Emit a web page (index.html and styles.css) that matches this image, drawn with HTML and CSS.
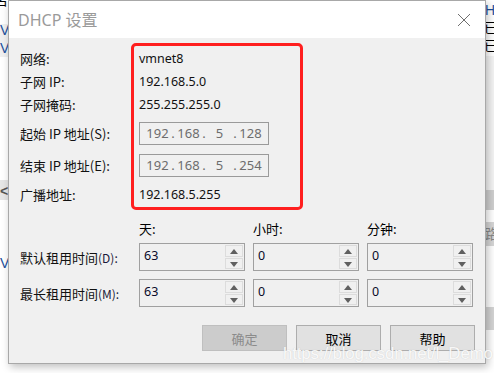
FILE: index.html
```html
<!DOCTYPE html>
<html lang="zh-CN">
<head>
    <meta charset="UTF-8">
    <title>DHCP 设置</title>
    <link rel="stylesheet" href="styles.css">
</head>
<body>
<div class="desk">
    <div class="back back-left">
        <span class="frag f1">名</span>
        <span class="frag f2">V</span>
        <span class="frag f3">V</span>
        <span class="frag f4">&lt;</span>
        <span class="frag f5">V</span>
    </div>
    <div class="back back-right">
        <span class="frag r1">H</span>
        <span class="frag r2">已</span>
        <span class="frag r3">已</span>
        <span class="frag r4">路</span>
    </div>

    <div class="dialog">
        <div class="titlebar">
            <span class="title">DHCP 设置</span>
            <svg class="close" width="14" height="14" viewBox="0 0 14 14">
                <path d="M1 1 L13 13 M13 1 L1 13" stroke="#6f6f6f" stroke-width="1" fill="none"/>
            </svg>
        </div>

        <div class="content">
            <div class="info">
                <span class="label">网络:</span><span class="value">vmnet8</span>
                <span class="label">子网 IP:</span><span class="value">192.168.5.0</span>
                <span class="label">子网掩码:</span><span class="value">255.255.255.0</span>
                <span class="label">起始 IP 地址(S):</span>
                <div class="ipbox"><span>192</span><i>.</i><span>168</span><i>.</i><span>5</span><i>.</i><span>128</span></div>
                <span class="label">结束 IP 地址(E):</span>
                <div class="ipbox"><span>192</span><i>.</i><span>168</span><i>.</i><span>5</span><i>.</i><span>254</span></div>
                <span class="label">广播地址:</span><span class="value">192.168.5.255</span>
            </div>

            <div class="lease">
                <span></span>
                <span class="head">天:</span>
                <span class="head">小时:</span>
                <span class="head">分钟:</span>

                <span class="label">默认租用时间<small>(D):</small></span>
                <div class="spin"><span class="num">63</span><div class="btns"><span class="up"></span><span class="down"></span></div></div>
                <div class="spin"><span class="num">0</span><div class="btns"><span class="up"></span><span class="down"></span></div></div>
                <div class="spin"><span class="num">0</span><div class="btns"><span class="up"></span><span class="down"></span></div></div>

                <span class="label">最长租用时间<small>(M):</small></span>
                <div class="spin"><span class="num">63</span><div class="btns"><span class="up"></span><span class="down"></span></div></div>
                <div class="spin"><span class="num">0</span><div class="btns"><span class="up"></span><span class="down"></span></div></div>
                <div class="spin"><span class="num">0</span><div class="btns"><span class="up"></span><span class="down"></span></div></div>
            </div>

            <div class="buttons">
                <button class="btn disabled">确定</button>
                <button class="btn">取消</button>
                <button class="btn">帮助</button>
            </div>
        </div>

        <div class="mark"></div>
    </div>
    <div class="watermark">https://blog.csdn.net/l_Demo</div>
</div>
</body>
</html>
```

FILE: styles.css
```css
* {
    margin: 0;
    padding: 0;
    box-sizing: border-box;
}

body {
    background: #fff;
    font-family: "Noto Sans", "Noto Sans CJK SC", sans-serif;
    font-size: 13px;
    color: #000;
}

.desk {
    width: 494px;
    height: 373px;
    position: relative;
    overflow: hidden;
}

/* windows behind the dialog */
.back {
    position: absolute;
    top: 0;
    height: 373px;
}

.back-left {
    left: 0;
    width: 10px;
    background: linear-gradient(#fff 0, #fff 24px, #f0f0f0 24px, #f0f0f0 57px, #fff 57px, #fff 180px, #e6e6e6 180px, #e6e6e6 200px, #fff 200px);
}

.back-right {
    right: 0;
    width: 12px;
    background: linear-gradient(#fff 0, #fff 56px, #f4f4f4 56px, #f4f4f4 190px, #cfcfcf 190px, #cfcfcf 210px, #fff 210px, #fff 222px, #d6d6d6 222px, #d6d6d6 246px, #fff 246px, #fff 307px, #d4d4d4 307px, #d4d4d4 330px, #fff 330px);
}

.frag {
    position: absolute;
    font-family: "Liberation Sans", "Noto Sans CJK SC", sans-serif;
    font-size: 14px;
    line-height: 16px;
}

.f1 { left: -6px; top: -8px; }
.f2 { left: 0; top: 22px; color: #1c4f9c; }
.f3 { left: 0; top: 40px; color: #1c4f9c; }
.f4 { left: 0; top: 183px; color: #555; font-weight: bold; }
.f5 { left: 0; top: 255px; color: #1c4f9c; }
.r1 { left: 3px; top: 2px; color: #1c4f9c; }
.r2 { left: 2px; top: 20px; }
.r3 { left: 2px; top: 38px; }
.r4 { left: 2px; top: 226px; color: #888; }

/* dialog */
.dialog {
    position: relative;
    margin-left: 8px;
    width: 478px;
    height: 364px;
    background: #f0f0f0;
    border: 1px solid #a8a8a8;
    box-shadow: 2px 3px 8px rgba(0, 0, 0, 0.25);
    display: flex;
    flex-direction: column;
}

.titlebar {
    height: 37px;
    background: #fff;
    display: flex;
    align-items: center;
    justify-content: space-between;
    padding: 0 14px 2px 9px;
}

.title {
    font-family: "Noto Sans", "Noto Sans CJK SC", sans-serif;
    font-size: 16px;
    color: #9a9a9a;
}

.close {
    margin-top: 2px;
}

.content {
    padding: 9px 10px 0 11px;
    display: flex;
    flex-direction: column;
}

.label {
    font-family: "Noto Sans CJK SC", sans-serif;
    font-size: 13px;
    color: #111;
    white-space: nowrap;
}

.label small {
    font-size: 12px;
    color: #1a1a3a;
}

.info {
    display: grid;
    grid-template-columns: 119px 1fr;
    grid-template-rows: 23px 23px 23px 34px 31px 26px;
    align-items: center;
}

.value {
    font-family: "Noto Sans", sans-serif;
    font-size: 12.5px;
    color: #111;
}

.ipbox {
    width: 130px;
    height: 23px;
    border: 1px solid #9a9a9a;
    background: #f0f0f0;
    color: #6d6d6d;
    font-family: "Noto Sans", sans-serif;
    font-size: 13px;
    line-height: 21px;
    padding-left: 6px;
    display: flex;
}

.ipbox span {
    width: 23px;
    text-align: center;
}

.ipbox i {
    width: 8px;
    font-style: normal;
    text-align: center;
}

.lease {
    margin-top: 7px;
    display: grid;
    grid-template-columns: 111px 106px 106px 106px;
    grid-template-rows: 21px 28px 28px;
    column-gap: 8px;
    row-gap: 8px;
    align-items: center;
}

.head {
    font-family: "Noto Sans CJK SC", sans-serif;
    font-size: 13px;
    align-self: end;
    line-height: 16px;
    margin-bottom: -2px;
}

.spin {
    height: 28px;
    border: 1px solid #a0a0a0;
    background: #f0f0f0;
    display: flex;
    justify-content: space-between;
    padding: 1px;
}

.num {
    font-family: "Noto Sans", sans-serif;
    font-size: 12.5px;
    color: #0a0a2a;
    padding: 2px 0 0 3px;
}

.btns {
    width: 18px;
    display: flex;
    flex-direction: column;
    gap: 1px;
}

.btns span {
    flex: 1;
    border: 1px solid #dcdcdc;
    background: #f0f0f0;
    position: relative;
}

.btns span::after {
    content: "";
    position: absolute;
    left: 4px;
    top: 3px;
    border-left: 4px solid transparent;
    border-right: 4px solid transparent;
}

.btns .up::after {
    border-bottom: 5px solid #606060;
}

.btns .down::after {
    border-top: 5px solid #606060;
}

.buttons {
    margin-top: 18px;
    display: flex;
    justify-content: flex-end;
    gap: 9px;
}

.btn {
    width: 85px;
    height: 26px;
    border: 1px solid #adadad;
    background: #e1e1e1;
    font-family: "Noto Sans CJK SC", sans-serif;
    font-size: 13px;
    color: #000;
}

.btn.disabled {
    background: #cccccc;
    border-color: #bfbfbf;
    color: #8b8b8b;
}

/* red highlight drawn over the values */
.mark {
    position: absolute;
    left: 122px;
    top: 42px;
    width: 172px;
    height: 167px;
    border: 3px solid #ff1f1f;
    border-radius: 5px;
}

.watermark {
    position: absolute;
    left: 283px;
    top: 344px;
    font-family: "Liberation Sans", sans-serif;
    font-size: 17px;
    color: rgba(255, 255, 255, 0.9);
    text-shadow: 0 0 1px rgba(160, 160, 160, 0.5);
    letter-spacing: -0.2px;
}
```
